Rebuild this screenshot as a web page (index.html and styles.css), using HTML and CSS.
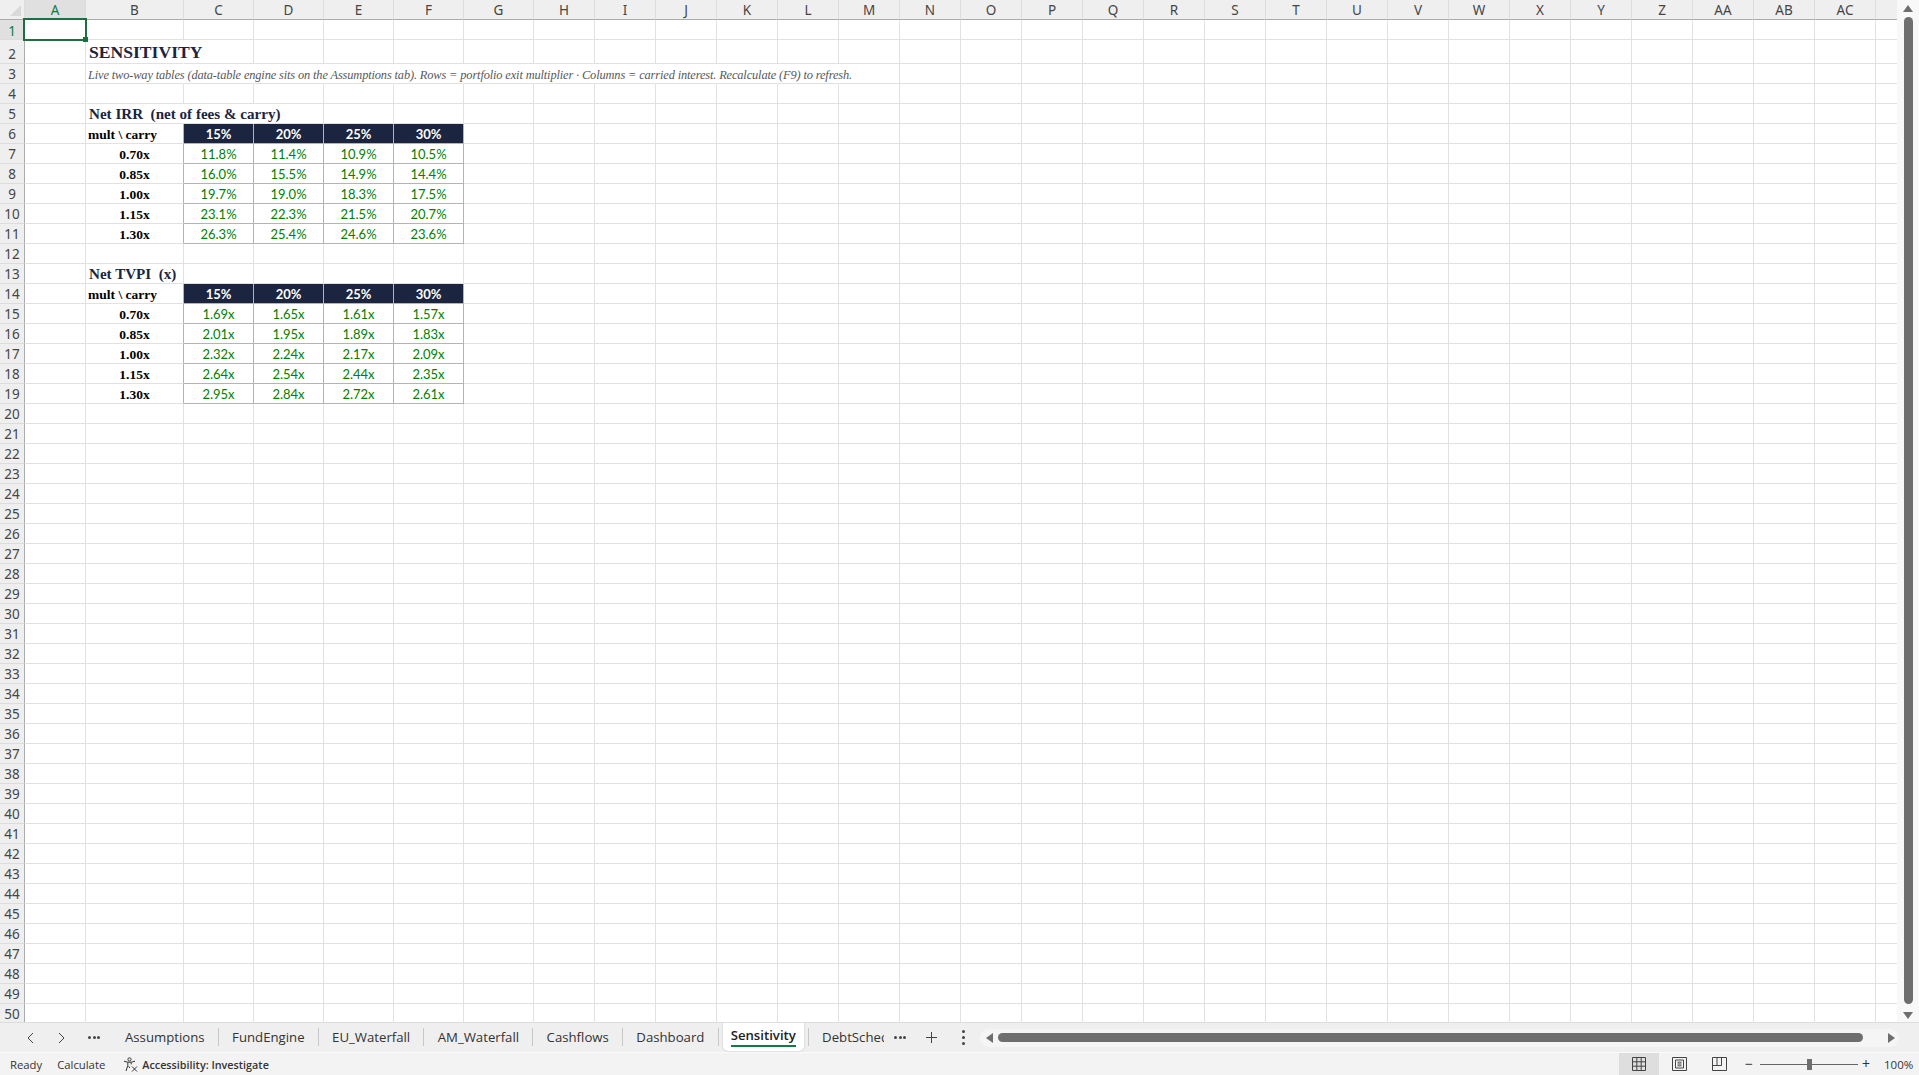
FILE: index.html
```html
<!DOCTYPE html>
<html lang="en">
<head>
    <meta charset="UTF-8">
    <title>Sensitivity - Excel</title>
    <link rel="stylesheet" href="styles.css">
</head>
<body>
    <div class="workbook">
        <div class="sheet" id="sheet"></div>
        <div class="vscroll">
            <svg class="arrow" width="10" height="7" viewBox="0 0 10 7"><path d="M5 0L10 7H0z"/></svg>
            <div class="vthumb"></div>
            <svg class="arrow" width="10" height="7" viewBox="0 0 10 7"><path d="M0 0H10L5 7z"/></svg>
        </div>
    </div>

    <div class="tabbar">
        <div class="tabnav">
            <svg width="9" height="12" viewBox="0 0 9 12"><path d="M7 1L2 6l5 5" class="line"/></svg>
            <svg width="9" height="12" viewBox="0 0 9 12"><path d="M2 1l5 5-5 5" class="line"/></svg>
            <span class="dots"><i></i><i></i><i></i></span>
        </div>
        <div class="tabstrip">
            <span class="tab">Assumptions</span><i class="tabsep"></i>
            <span class="tab">FundEngine</span><i class="tabsep"></i>
            <span class="tab">EU_Waterfall</span><i class="tabsep"></i>
            <span class="tab">AM_Waterfall</span><i class="tabsep"></i>
            <span class="tab">Cashflows</span><i class="tabsep"></i>
            <span class="tab">Dashboard</span><i class="tabsep"></i>
            <span class="tab active"><b>Sensitivity</b></span><i class="tabsep"></i>
            <span class="tab">DebtSchedule</span>
        </div>
        <div class="tabtool more"><span class="dots"><i></i><i></i><i></i></span></div>
        <div class="tabtool add">
            <svg width="13" height="13" viewBox="0 0 13 13"><path d="M6.5 1v11M1 6.5h11" class="line"/></svg>
        </div>
        <div class="tabtool menu"><span class="vdots"><i></i><i></i><i></i></span></div>
        <div class="hscroll">
            <svg class="arrow" width="7" height="10" viewBox="0 0 7 10"><path d="M7 0V10L0 5z"/></svg>
            <div class="hthumb"></div>
            <svg class="arrow" width="7" height="10" viewBox="0 0 7 10"><path d="M0 0L7 5L0 10z"/></svg>
        </div>
    </div>

    <div class="statusbar">
        <span class="status-item">Ready</span>
        <span class="status-item">Calculate</span>
        <span class="access">
            <svg width="15" height="15" viewBox="0 0 15 15">
                <circle cx="6.5" cy="2.4" r="1.6" class="thin"/>
                <path d="M1 4.2l3.6 1h3.8l3.6-1M4.8 5.4v3L3 14M8.2 5.4v2M5.5 9.2L7 11" class="thin"/>
                <path d="M9 9.5l5 5M14 9.5l-5 5" class="thin"/>
            </svg>
            Accessibility: Investigate
        </span>
        <div class="views">
            <span class="view current">
                <svg width="14" height="14" viewBox="0 0 14 14"><path d="M.5.5h13v13H.5zM.5 4.8h13M.5 9.2h13M4.8.5v13M9.2.5v13" class="line"/></svg>
            </span>
            <span class="view">
                <svg width="15" height="14" viewBox="0 0 15 14"><path d="M.5.5h14v13H.5zM3.5 3h8v8h-8zM5.5 5.2h4M5.5 7h4M5.5 8.8h4" class="line"/></svg>
            </span>
            <span class="view">
                <svg width="15" height="14" viewBox="0 0 15 14"><path d="M.5.5h14v13H.5zM.5 8.5h9V.5M5 .5v8" class="line"/></svg>
            </span>
        </div>
        <div class="zoombar">
            <span class="zoombtn">&minus;</span>
            <div class="slider"><div class="knob"></div></div>
            <span class="zoombtn">+</span>
            <span class="zoomval">100%</span>
        </div>
    </div>
    <script src="grid.js"></script>
</body>
</html>
```

FILE: styles.css
```css
* {
    box-sizing: border-box;
}
html, body {
    height: 100%;
}
body {
    margin: 0;
    display: flex;
    flex-direction: column;
    overflow: hidden;
    background: #fff;
    color: #333;
    font-family: "Open Sans", "Noto Sans", sans-serif;
}

.workbook {
    height: 1022px;
    display: flex;
    flex: none;
}
.sheet {
    width: 1897px;
    height: 1022px;
    overflow: hidden;
}
.row {
    display: grid;
    grid-template-columns: 25px 61px 98px repeat(5, 70px) repeat(22, 61px) 22px;
    grid-template-rows: 100%;
    height: 20px;
}
.row.tall {
    height: 24px;
}
.cell {
    position: relative;
    border-right: 1px solid #e1e1e1;
    border-bottom: 1px solid #e1e1e1;
    font-size: 14px;
    line-height: 21px;
    white-space: pre;
}
.cell:last-child {
    border-right: none;
}

/* headers */
.colhead, .rowhead {
    background: #efefef;
    color: #454545;
    font-family: "Noto Sans", sans-serif;
    font-size: 13.5px;
    line-height: 20px;
    text-align: center;
}
.colhead {
    border-right-color: #dcdcdc;
    border-bottom-color: #ababab;
}
.rowhead {
    border-right-color: #ababab;
    border-bottom-color: #dcdcdc;
}
.row.tall .rowhead {
    line-height: 28px;
}
.selhead {
    background: #e0e0e0;
    color: #107c41;
}
.rowhead.selhead {
    line-height: 22px;
}
.corner {
    border-right-color: #dcdcdc;
}
.corner::after {
    content: "";
    position: absolute;
    left: 10px;
    top: 5px;
    border-left: 11px solid transparent;
    border-bottom: 11px solid #d9d9d9;
}

/* active cell */
.selected::after {
    content: "";
    position: absolute;
    left: -2px;
    top: -2px;
    right: -2px;
    bottom: -2px;
    border: 2px solid #1d6f42;
    z-index: 2;
}
.selected::before {
    content: "";
    position: absolute;
    right: -3px;
    bottom: -3px;
    width: 5px;
    height: 5px;
    background: #1d6f42;
    z-index: 3;
}

/* content */
.title, .subtitle, .section, .corner-label, .mult {
    font-family: "Liberation Serif", serif;
}
.title {
    padding-left: 3px;
    color: #1b2540;
    font-size: 17.6px;
    font-weight: bold;
    line-height: 25px;
}
.subtitle {
    padding-left: 2px;
    color: #595959;
    font-size: 12.4px;
    font-style: italic;
    letter-spacing: -0.14px;
    line-height: 22px;
}
.section {
    padding-left: 3px;
    color: #1b2540;
    font-size: 15.1px;
    font-weight: bold;
}
.corner-label {
    padding-left: 2px;
    color: #000;
    font-size: 13.5px;
    font-weight: bold;
}
.mult {
    color: #000;
    font-size: 13.5px;
    font-weight: bold;
    text-align: center;
}
.spill {
    border-right-color: transparent;
}
.edge {
    border-right-color: #b4b4b4;
}
.head {
    background: #1b2540;
    border-right-color: #b4b4b4;
    border-bottom-color: #b4b4b4;
    color: #fff;
    font-family: Lato, sans-serif;
    font-size: 13px;
    font-weight: bold;
    text-align: center;
}
.val {
    border-right-color: #b4b4b4;
    border-bottom-color: #b4b4b4;
    color: #008000;
    font-family: Lato, sans-serif;
    font-size: 13px;
    text-align: center;
}

/* vertical scrollbar */
.vscroll {
    width: 22px;
    height: 1022px;
    display: flex;
    flex-direction: column;
    align-items: center;
    padding: 5px 0 3px;
    background: #f8f8f8;
}
.vthumb {
    flex: 1;
    width: 9px;
    margin: 5px 0 8px;
    background: #6e6e6e;
    border-radius: 5px;
}
.arrow path {
    fill: #6e6e6e;
}

/* sheet tabs */
.tabbar {
    height: 31px;
    display: flex;
    flex: none;
    align-items: center;
    background: #efefef;
    border-top: 1px solid #dcdcdc;
    border-bottom: 1px solid #fafafa;
    font-size: 13.2px;
}
.line {
    fill: none;
    stroke: #444;
    stroke-width: 1;
}
.tabnav {
    width: 111.75px;
    display: flex;
    align-items: center;
    gap: 22px;
    padding-left: 26px;
}
.dots {
    display: inline-flex;
    gap: 1.5px;
}
.dots i {
    width: 3px;
    height: 3px;
    border-radius: 50%;
    background: #444;
}
.vdots {
    display: inline-flex;
    flex-direction: column;
    gap: 3px;
}
.vdots i {
    width: 3px;
    height: 3px;
    border-radius: 50%;
    background: #444;
}
.tabstrip {
    width: 772.25px;
    height: 100%;
    display: flex;
    align-items: center;
    padding-bottom: 1px;
    overflow: hidden;
    white-space: nowrap;
}
.tab {
    padding: 0 13.25px;
}
.tabsep {
    flex: none;
    width: 1px;
    height: 18px;
    background: #c8c8c8;
}
.tab.active {
    align-self: flex-start;
    height: 29px;
    margin: -1px 4px 0;
    padding: 3px 8px 0;
    background: #fff;
    border-radius: 0 0 5px 5px;
    box-shadow: 0 0 2px #bbb;
    color: #222;
}
.tab.active b {
    display: block;
    font-weight: 600;
    line-height: 20px;
    border-bottom: 2px solid #107c41;
}
.tabtool {
    display: flex;
    justify-content: center;
    align-items: center;
}
.more {
    width: 32px;
}
.add {
    width: 30px;
}
.menu {
    width: 34px;
}
.hscroll {
    width: 919px;
    height: 18px;
    display: flex;
    align-items: center;
    gap: 5px;
    padding: 0 4px 0 6px;
    background: #f5f5f5;
    border-radius: 9px;
}
.hthumb {
    flex: 1;
    height: 9px;
    margin-right: 20px;
    background: #6e6e6e;
    border-radius: 5px;
}

/* status bar */
.statusbar {
    flex: 1;
    display: flex;
    align-items: center;
    background: #f3f3f3;
    color: #333;
    font-size: 11.3px;
}
.status-item {
    margin-left: 10px;
    margin-right: 5px;
}
.access {
    display: flex;
    align-items: center;
    gap: 4px;
    margin-left: 13px;
    font-weight: 600;
    font-size: 10.8px;
}
.thin {
    fill: none;
    stroke: #333;
    stroke-width: 1;
}
.views {
    display: flex;
    margin-left: auto;
    height: 100%;
}
.view {
    width: 40px;
    display: flex;
    justify-content: center;
    align-items: center;
}
.view.current {
    background: #dedede;
}
.zoombar {
    width: 180px;
    display: flex;
    align-items: center;
    padding-left: 6px;
}
.zoombtn {
    width: 8px;
    margin-right: 7px;
    font-size: 14px;
    line-height: 14px;
    text-align: center;
}
.slider {
    position: relative;
    width: 98px;
    height: 1px;
    margin: 0 4px 0 0;
    background: #666;
}
.knob {
    position: absolute;
    left: 47px;
    top: -5px;
    width: 5px;
    height: 11px;
    background: #6e6e6e;
}
.zoomval {
    margin-left: 7px;
    font-size: 11.5px;
}
```

FILE: grid.js
```js
const letters = ['A','B','C','D','E','F','G','H','I','J','K','L','M','N','O','P','Q','R','S','T','U','V','W','X','Y','Z','AA','AB','AC',''];
const heads = ['15%', '20%', '25%', '30%'];
const mults = ['0.70x', '0.85x', '1.00x', '1.15x', '1.30x'];
const irr = [
    ['11.8%', '11.4%', '10.9%', '10.5%'],
    ['16.0%', '15.5%', '14.9%', '14.4%'],
    ['19.7%', '19.0%', '18.3%', '17.5%'],
    ['23.1%', '22.3%', '21.5%', '20.7%'],
    ['26.3%', '25.4%', '24.6%', '23.6%']
];
const tvpi = [
    ['1.69x', '1.65x', '1.61x', '1.57x'],
    ['2.01x', '1.95x', '1.89x', '1.83x'],
    ['2.32x', '2.24x', '2.17x', '2.09x'],
    ['2.64x', '2.54x', '2.44x', '2.35x'],
    ['2.95x', '2.84x', '2.72x', '2.61x']
];

// row number -> column index -> { text, cls }
const content = {};
function put(row, col, text, cls) {
    content[row] = content[row] || {};
    content[row][col] = { text: text, cls: cls };
}
function spill(row, from, to) {
    for (let c = from; c <= to; c++) {
        const old = content[row] && content[row][c];
        put(row, c, old ? old.text : '', (old ? old.cls + ' ' : '') + 'spill');
    }
}
function table(start, title, values) {
    put(start, 1, title, 'section');
    put(start + 1, 1, 'mult \\ carry', 'corner-label edge');
    heads.forEach((h, i) => put(start + 1, 2 + i, h, 'head'));
    values.forEach((line, r) => {
        put(start + 2 + r, 1, mults[r], 'mult edge');
        line.forEach((v, i) => put(start + 2 + r, 2 + i, v, 'val'));
    });
}

put(2, 1, 'SENSITIVITY', 'title');
put(3, 1, 'Live two-way tables (data-table engine sits on the Assumptions tab). Rows = portfolio exit multiplier \u00b7 Columns = carried interest. Recalculate (F9) to refresh.', 'subtitle');
table(5, 'Net IRR  (net of fees & carry)', irr);
table(13, 'Net TVPI  (x)', tvpi);
spill(2, 1, 1);
spill(3, 1, 11);
spill(5, 1, 2);

function cell(parent, text, cls) {
    const el = document.createElement('div');
    el.className = 'cell ' + cls;
    el.textContent = text;
    parent.appendChild(el);
}

const sheet = document.getElementById('sheet');

const headRow = document.createElement('div');
headRow.className = 'row';
cell(headRow, '', 'colhead corner');
letters.forEach((l, i) => cell(headRow, l, 'colhead' + (i === 0 ? ' selhead' : '')));
sheet.appendChild(headRow);

for (let r = 1; r <= 50; r++) {
    const row = document.createElement('div');
    row.className = r === 2 ? 'row tall' : 'row';
    cell(row, r, 'rowhead' + (r === 1 ? ' selhead' : ''));
    letters.forEach((l, c) => {
        const item = content[r] && content[r][c];
        let cls = item ? item.cls : '';
        if (r === 1 && c === 0) cls = 'selected';
        cell(row, item ? item.text : '', cls);
    });
    sheet.appendChild(row);
}
```
